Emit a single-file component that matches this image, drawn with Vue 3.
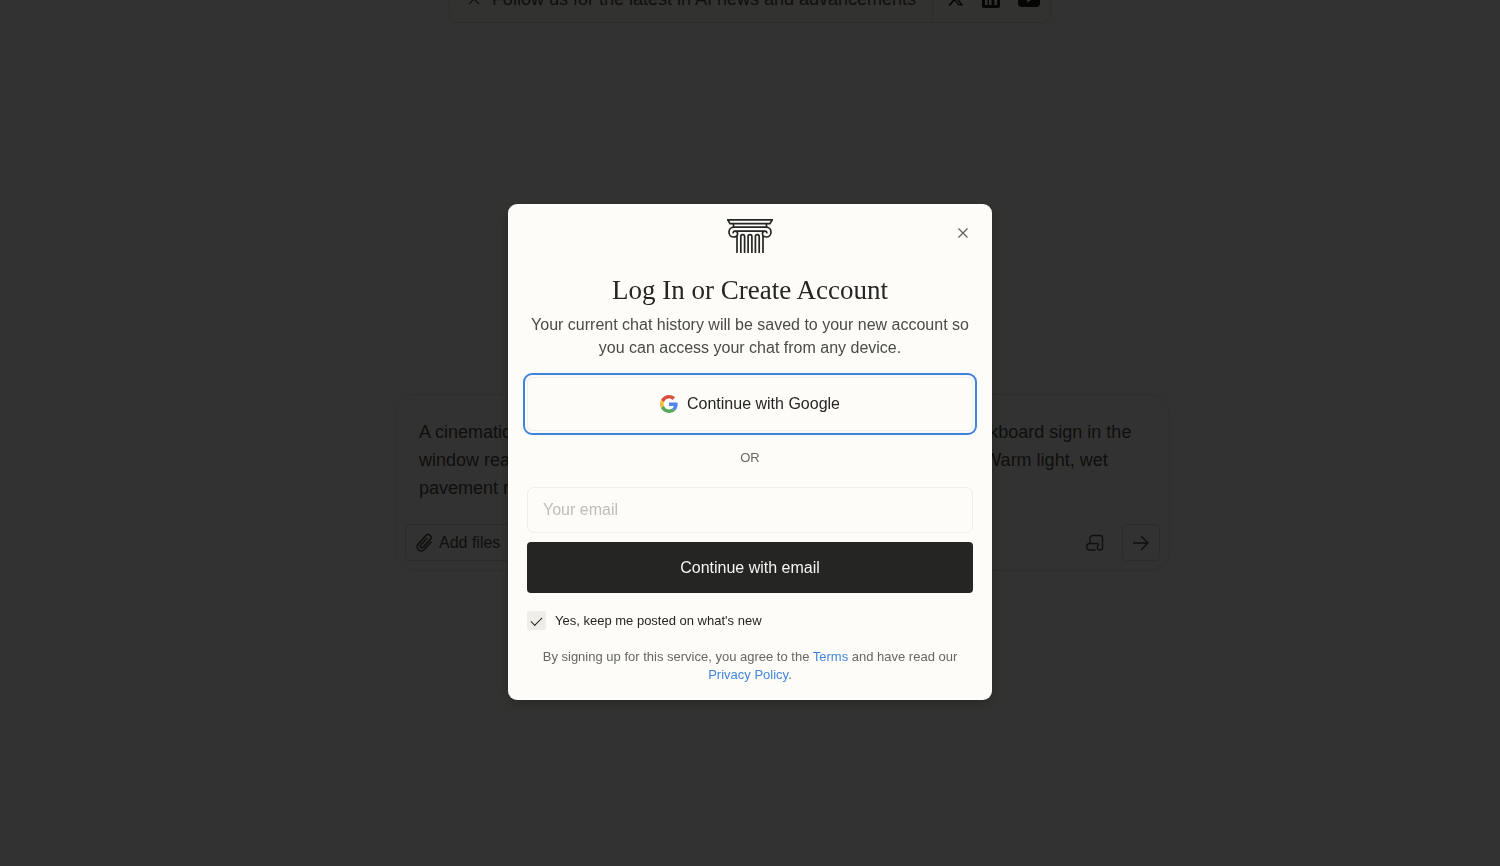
<script setup>
import { ref } from 'vue';

const email = ref('');
const newsletter = ref(true);
const prompt = ref(
    'A cinematic shot of a cozy corner bakery on a rainy evening, with a chalkboard sign in the\n' +
    'window reading “Fresh bread daily” while people stroll past in the cold. Warm light, wet\n' +
    'pavement reflections.'
);
</script>

<template>
    <div class="page">
        <header class="banner">
            <div class="banner-message">
                <button class="icon-button" type="button" aria-label="Dismiss">
                    <svg width="12" height="12" viewBox="0 0 12 12"><path d="M1 1l10 10M11 1L1 11" /></svg>
                </button>
                <span>Follow us for the latest in AI news and advancements</span>
            </div>
            <nav class="banner-social">
                <a href="#" aria-label="X">
                    <svg width="17" height="17" viewBox="0 0 24 24">
                        <path class="solid" d="M18.2 2.3h3.4l-7.4 8.4L23 22h-6.800l-5.300-6.900L4.800 22H1.400l7.900-9L1 2.300h7l4.800 6.300zM17 20h1.900L7 4.200H5z" />
                    </svg>
                </a>
                <a href="#" aria-label="LinkedIn">
                    <svg width="18" height="18" viewBox="0 0 18 18">
                        <path class="solid" fill-rule="evenodd" d="M2 0h14a2 2 0 0 1 2 2v14a2 2 0 0 1-2 2H2a2 2 0 0 1-2-2V2a2 2 0 0 1 2-2zM3 7v8h2.500V7zM3 3v2.500h2.500V3zM7 7v8h2.500v-4.500c0-2 3-2 3 0V15H15v-5c0-3.500-4-4-5.500-2V7z" />
                    </svg>
                </a>
                <a href="#" aria-label="YouTube">
                    <svg width="22" height="16" viewBox="0 0 22 16">
                        <path class="solid" fill-rule="evenodd" d="M4 0h14a4 4 0 0 1 4 4v8a4 4 0 0 1-4 4H4a4 4 0 0 1-4-4V4a4 4 0 0 1 4-4zM9 4.500v7l6-3.500z" />
                    </svg>
                </a>
            </nav>
        </header>

        <main class="workspace">
            <form class="composer" @submit.prevent>
                <textarea v-model="prompt" class="composer-text" rows="3" aria-label="Prompt"></textarea>
                <div class="composer-tools">
                    <button class="tool-button" type="button">
                        <svg width="18" height="20" viewBox="0 0 18 20">
                            <path class="bold" d="M15.500 8.500l-7.300 8a4 4 0 0 1-6-5.400l7.800-8.600a2.900 2.900 0 0 1 4.300 3.900l-7.300 8a1.600 1.600 0 0 1-2.400-2.200l6.400-7" />
                        </svg>
                        Add files
                    </button>
                    <button class="icon-button scroll-button" type="button" aria-label="Prompt library">
                        <svg width="18" height="18" viewBox="0 0 18 18">
                            <path class="medium" d="M4 9.500V4a2.500 2.500 0 0 1 2.500-2.500H14A2.500 2.500 0 0 1 16.500 4v9.500a2.600 2.600 0 0 1-5.200 0c0-1.200 1.200-1.500 1.200-2.700 0-.8-.6-1.300-1.400-1.300H4a3.200 3.200 0 0 0 0 6.500h5.500" />
                        </svg>
                    </button>
                    <button class="tool-button send-button" type="submit" aria-label="Send">
                        <svg width="16" height="16" viewBox="0 0 16 16"><path class="medium" d="M0 8h15M8 1l7 7-7 7" /></svg>
                    </button>
                </div>
            </form>
        </main>

        <div class="overlay">
            <section class="modal" role="dialog" aria-modal="true" aria-labelledby="login-title">
                <button class="icon-button close-button" type="button" aria-label="Close">
                    <svg width="10" height="10" viewBox="0 0 10 10"><path d="M.5.5l9 9M9.500.5l-9 9" /></svg>
                </button>

                <svg class="logo" width="46" height="35" viewBox="0 0 46 35">
                    <path d="M.8.9h44.400l-2.200 3.800H3zM6.500 4.800v3.200M39.500 4.800v3.200" />
                    <path d="M7 8.200h32c3 0 5 2.200 5 5s-2 4.800-4.600 4.800-4-1.600-4-3.300 1.200-2.500 2.600-2.500 2 1 1.800 2.200M7 8.200c-3 0-5 2.200-5 5S4 18 6.600 18s4-1.600 4-3.300-1.200-2.500-2.600-2.500-2 1-1.800 2.200M8 12.200h30" />
                    <path d="M10 17V34M36 17V34M13.800 34V17.500a1.900 1.900 0 0 1 3.800 0V34M21.100 34V17.500a1.900 1.900 0 0 1 3.800 0V34M28.400 34V17.500a1.900 1.900 0 0 1 3.800 0V34" />
                </svg>

                <h1 id="login-title" class="title">Log In or Create Account</h1>
                <p class="intro">Your current chat history will be saved to your new account so you can access your chat from any device.</p>

                <button class="google-button" type="button">
                    <svg width="18" height="18" viewBox="0 0 48 48">
                        <path fill="#db4f40" d="M24 9.500c3.500 0 6.700 1.200 9.200 3.600l6.900-6.900C35.900 2.400 30.500 0 24 0 14.600 0 6.500 5.400 2.600 13.200l8 6.200C12.400 13.700 17.700 9.500 24 9.500z" />
                        <path fill="#5085ed" d="M47 24.600c0-1.600-.2-3.100-.4-4.600H24v9h12.900c-.6 3-2.200 5.500-4.700 7.200l7.700 6C44.400 38 47 31.800 47 24.600z" />
                        <path fill="#f2bd42" d="M10.500 28.600a14.500 14.500 0 0 1 0-9.200l-8-6.200a24 24 0 0 0 0 21.600z" />
                        <path fill="#58a55c" d="M24 48c6.500 0 11.900-2.100 15.900-5.800l-7.700-6c-2.200 1.500-4.900 2.300-8.200 2.300-6.300 0-11.600-4.200-13.500-9.900l-8 6.200C6.500 42.600 14.600 48 24 48z" />
                    </svg>
                    Continue with Google
                </button>

                <p class="divider">OR</p>

                <form class="email-form" @submit.prevent>
                    <input v-model="email" class="email-input" type="email" placeholder="Your email" aria-label="Your email">
                    <button class="email-button" type="submit">Continue with email</button>
                    <label class="newsletter">
                        <input v-model="newsletter" class="checkbox" type="checkbox">
                        Yes, keep me posted on what's new
                    </label>
                </form>

                <p class="legal">
                    By signing up for this service, you agree to the <a href="#">Terms</a> and have read our
                    <a href="#">Privacy Policy</a>.
                </p>
            </section>
        </div>
    </div>
</template>

<style>
body {
    margin: 0;
    overflow: hidden;
}
</style>

<style scoped>
.page {
    display: flow-root;
    min-height: 100vh;
    background-color: #fcfbfa;
    color: #4a4a46;
    font-family: "Liberation Sans", Arial, sans-serif;
    font-size: 16px;
}

.page *,
.page *::before {
    box-sizing: border-box;
}

button,
input,
textarea {
    font: inherit;
    color: inherit;
    margin: 0;
}

svg {
    flex: none;
    fill: none;
    stroke: currentColor;
    stroke-width: 1.2;
}

.solid {
    fill: currentColor;
    stroke: none;
}

.medium {
    stroke-width: 1.4;
}

.bold {
    stroke-width: 1.6;
}

.icon-button {
    display: flex;
    padding: 0;
    border: 0;
    background: none;
}

/* Barra superior, parcialmente fuera de la vista */
.banner {
    display: flex;
    width: fit-content;
    height: 46px;
    margin: 0 auto;
    margin-top: -23px;
    border: 1px solid #dedcd8;
    border-radius: 10px;
    background-color: #fbf8f0;
    font-size: 18px;
}

.banner-message {
    display: flex;
    align-items: center;
    gap: 12px;
    padding: 0 16px 2px 18px;
}

.banner-social {
    display: flex;
    align-items: center;
    gap: 18px;
    padding: 0 10px 3px 14px;
    border-left: 1px solid #dedcd8;
}

.banner-social a {
    display: flex;
    color: #20201c;
}

.workspace {
    display: flex;
    justify-content: center;
    padding: 371px 0 0 65px;
}

.composer {
    width: 100%;
    max-width: 775px;
    padding: 0 9px 9px;
    border: 1px solid #e4e4e2;
    border-radius: 20px;
}

.composer-text {
    display: block;
    width: 100%;
    height: 129px;
    padding: 23px 14px;
    border: 0;
    outline: 0;
    background: none;
    font-size: 18px;
    line-height: 28px;
    resize: none;
    overflow: hidden;
}

.composer-tools {
    display: flex;
    align-items: center;
}

.tool-button {
    display: flex;
    align-items: center;
    justify-content: center;
    gap: 5px;
    height: 37px;
    padding: 0 10px;
    border: 1px solid #d8d8d4;
    border-radius: 5px;
    background: none;
}

.scroll-button {
    margin: 0 18px 0 auto;
}

.send-button {
    width: 38px;
}

/* Ventana de acceso */
.overlay {
    position: fixed;
    inset: 0;
    display: flex;
    align-items: center;
    justify-content: center;
    padding-top: 38px;
    background-color: rgba(0, 0, 0, 0.8);
}

.modal {
    position: relative;
    display: flex;
    flex-direction: column;
    align-items: center;
    width: 100%;
    max-width: 484px;
    padding: 15px 19px;
    border-radius: 9px;
    background-color: #fdfcf9;
    color: #252523;
    text-align: center;
    box-shadow: 0 4px 14px rgba(0, 0, 0, 0.25);
}

.close-button {
    position: absolute;
    top: 24px;
    right: 24px;
    color: #5c5c58;
}

.logo {
    stroke-width: 1.7;
}

.title {
    margin: 18px 0 5px;
    font-family: "Liberation Serif", "Times New Roman", serif;
    font-size: 27px;
    font-weight: 400;
    line-height: 36px;
}

.intro {
    margin: 0 0 18px;
    color: #4a4a46;
    line-height: 23px;
}

.google-button {
    display: flex;
    align-items: center;
    justify-content: center;
    gap: 9px;
    width: 100%;
    height: 54px;
    border: 1px solid #eeeeec;
    border-radius: 5px;
    outline: 2px solid #3f83dd;
    outline-offset: 2px;
    background: none;
}

.google-button svg {
    stroke: none;
}

.divider {
    margin: 18px 0 20px;
    color: #666662;
    font-size: 13px;
    line-height: 18px;
}

.email-form {
    display: flex;
    flex-direction: column;
    width: 100%;
}

.email-input {
    height: 46px;
    margin-bottom: 9px;
    padding: 0 15px;
    border: 1px solid #eeeeec;
    border-radius: 7px;
    background: none;
}

.email-input::placeholder {
    color: #bdbdb8;
    opacity: 1;
}

.email-button {
    height: 51px;
    border: 0;
    border-radius: 4px;
    background-color: #252523;
    color: #f5f4f0;
}

.newsletter {
    display: flex;
    align-items: center;
    gap: 9px;
    margin: 18px 0;
    font-size: 13px;
    line-height: 19px;
}

.checkbox {
    display: grid;
    place-items: center;
    width: 19px;
    height: 19px;
    border-radius: 2px;
    background-color: #efede7;
    appearance: none;
}

.checkbox:checked::before {
    content: '';
    width: 11px;
    height: 6px;
    margin-bottom: 2px;
    border: solid #252523;
    border-width: 0 0 1px 1px;
    transform: rotate(-45deg);
}

.legal {
    margin: 0 0 1px;
    color: #666662;
    font-size: 13px;
    line-height: 18px;
}

.legal a {
    color: #4285dc;
    text-decoration: none;
}
</style>
